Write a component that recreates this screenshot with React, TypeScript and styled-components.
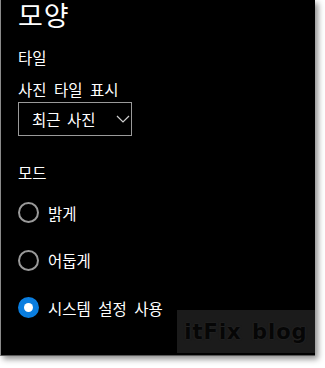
import styled, { createGlobalStyle } from 'styled-components';

const GlobalStyle = createGlobalStyle`
   html, body {
      margin: 0;
      padding: 0;
      background: #ffffff;
   }
   * {
      box-sizing: border-box;
   }
`;

const Frame = styled.div`
   width: 325px;
   height: 368px;
   background: #ffffff;
   overflow: hidden;
`;

const Panel = styled.div`
   position: relative;
   width: 315px;
   height: 356px;
   background: #000000;
   border-left: 1px solid #8a8a8a;
   border-bottom: 1px solid #5a5a5a;
   box-shadow: 3px 3px 6px rgba(0, 0, 0, 0.45);
   padding: 0 0 0 17px;
   color: #ffffff;
   font-family: 'Noto Sans CJK KR', 'Noto Sans', sans-serif;
   display: flex;
   flex-direction: column;
`;

const Title = styled.h1`
   margin: 0;
   font-size: 27px;
   font-weight: 400;
   line-height: 29px;
   letter-spacing: 1px;
`;

const Label = styled.div<{ $top: number }>`
   margin-top: ${(p) => p.$top}px;
   font-size: 15.5px;
   line-height: 20px;
   letter-spacing: 0;
   word-spacing: 4px;
   white-space: nowrap;
`;

const Select = styled.button`
   margin-top: 3px;
   width: 114px;
   height: 34px;
   display: flex;
   align-items: center;
   padding: 0 0 0 13px;
   background: #000000;
   border: 1px solid #9a9a9a;
   color: #ffffff;
   font-family: inherit;
   font-size: 15.5px;
   letter-spacing: 0;
   word-spacing: 3px;
   white-space: nowrap;
`;

const Chevron = styled.svg`
   margin-left: 20px;
   width: 14px;
   height: 8px;
   flex: none;
`;

const RadioList = styled.div`
   margin-top: 20px;
   display: flex;
   flex-direction: column;
   gap: 26.5px;
`;

const RadioRow = styled.label`
   display: flex;
   align-items: center;
   gap: 9px;
   font-size: 15.5px;
   line-height: 20px;
   letter-spacing: 0;
   word-spacing: 4px;
   white-space: nowrap;
`;

const RadioMark = styled.span<{ $checked?: boolean }>`
   width: 21px;
   height: 21px;
   border-radius: 50%;
   flex: none;
   display: flex;
   align-items: center;
   justify-content: center;
   border: 2px solid ${(p) => (p.$checked ? '#0a7ee0' : '#9a9a9a')};
   background: ${(p) => (p.$checked ? '#0a7ee0' : 'transparent')};
   &::after {
      content: '';
      display: ${(p) => (p.$checked ? 'block' : 'none')};
      width: 9px;
      height: 9px;
      border-radius: 50%;
      background: #ffffff;
   }
`;

const Watermark = styled.div`
   position: absolute;
   left: 176px;
   top: 310px;
   width: 138px;
   height: 43px;
   background: #1b1b1b;
   display: flex;
   align-items: center;
   justify-content: center;
   font-family: 'DejaVu Sans', 'Liberation Sans', sans-serif;
   font-weight: 700;
   font-size: 21px;
   letter-spacing: 1px;
   word-spacing: 2px;
   color: #060606;
   text-shadow: 0 0 2px #2e2e2e;
`;

const modes = [
   { label: '밝게', checked: false },
   { label: '어둡게', checked: false },
   { label: '시스템 설정 사용', checked: true },
];

const App = () => {
   return (
      <>
         <GlobalStyle />
         <Frame>
            <Panel>
               <Title>모양</Title>
               <Label $top={18}>타일</Label>
               <Label $top={12}>사진 타일 표시</Label>
               <Select>
                  <span>최근 사진</span>
                  <Chevron viewBox="0 0 14 8">
                     <path d="M1 1 L7 7 L13 1" fill="none" stroke="#cfcfcf" strokeWidth="1.2" />
                  </Chevron>
               </Select>
               <Label $top={26}>모드</Label>
               <RadioList>
                  {modes.map((mode) => (
                     <RadioRow key={mode.label}>
                        <RadioMark $checked={mode.checked} />
                        <span>{mode.label}</span>
                     </RadioRow>
                  ))}
               </RadioList>
               <Watermark>itFix blog</Watermark>
            </Panel>
         </Frame>
      </>
   );
};

export default App;
